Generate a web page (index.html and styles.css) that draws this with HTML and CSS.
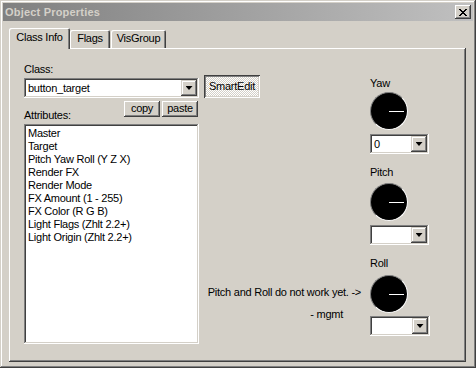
FILE: index.html
```html
<!DOCTYPE html>
<html lang="en">
    <head>
        <title>Object Properties</title>
        <link rel="stylesheet" href="styles.css">
    </head>
    <body>
        <div class="window">
            <div class="titlebar">
                <span class="title">Object Properties</span>
                <div class="close">
                    <svg width="8" height="7" viewBox="0 0 8 7" shape-rendering="crispEdges">
                        <path d="M0 0h2v1H0zM6 0h2v1H6zM1 1h2v1H1zM5 1h2v1H5zM2 2h4v1H2zM3 3h2v1H3zM2 4h4v1H2zM1 5h2v1H1zM5 5h2v1H5zM0 6h2v1H0zM6 6h2v1H6z"/>
                    </svg>
                </div>
            </div>

            <div class="content">
                <div class="tabs">
                    <div class="tab tab-active tab-class">Class Info</div>
                    <div class="tab tab-flags">Flags</div>
                    <div class="tab tab-vis">VisGroup</div>
                </div>

                <div class="panel">
                    <!-- Class / attributes column -->
                    <div class="left">
                        <p class="label">Class:</p>
                        <div class="combo combo-class">
                            <span class="combo-value">button_target</span>
                            <span class="drop"></span>
                        </div>
                        <div class="attr-row">
                            <p class="label attr-label">Attributes:</p>
                            <div class="buttons">
                                <div class="btn">copy</div>
                                <div class="btn">paste</div>
                            </div>
                        </div>
                        <ul class="list">
                            <li>Master</li>
                            <li>Target</li>
                            <li>Pitch Yaw Roll (Y Z X)</li>
                            <li>Render FX</li>
                            <li>Render Mode</li>
                            <li>FX Amount (1 - 255)</li>
                            <li>FX Color (R G B)</li>
                            <li>Light Flags (Zhlt 2.2+)</li>
                            <li>Light Origin (Zhlt 2.2+)</li>
                        </ul>
                    </div>

                    <!-- SmartEdit + angle dials -->
                    <div class="side">
                        <div class="smartedit">SmartEdit</div>

                        <p class="label dial-label yaw-label">Yaw</p>
                        <div class="dial dial-yaw"></div>
                        <div class="combo combo-angle">
                            <span class="combo-value">0</span>
                            <span class="drop"></span>
                        </div>

                        <p class="label dial-label">Pitch</p>
                        <div class="dial dial-pitch"></div>
                        <div class="combo combo-angle">
                            <span class="combo-value"></span>
                            <span class="drop"></span>
                        </div>

                        <p class="label dial-label">Roll</p>
                        <div class="note">
                            <p class="note-line">Pitch and Roll do not work yet. -&gt;</p>
                            <p class="note-sign">- mgmt</p>
                        </div>
                        <div class="dial dial-roll"></div>
                        <div class="combo combo-angle combo-roll">
                            <span class="combo-value"></span>
                            <span class="drop"></span>
                        </div>
                    </div>
                </div>
            </div>
        </div>
    </body>
</html>
```

FILE: styles.css
```css
body {
    margin: 0;
    background: #d4d0c8;
    font: 11px "Liberation Sans", Arial, sans-serif;
    letter-spacing: -0.25px;
    color: #000;
}

p,
ul {
    margin: 0;
}

/* Window frame */
.window {
    width: 476px;
    height: 368px;
    box-sizing: border-box;
    padding: 3px;
    display: flex;
    flex-direction: column;
    background: #d4d0c8;
    box-shadow: inset -1px -1px #404040, inset 1px 1px #d4d0c8,
                inset -2px -2px #808080, inset 2px 2px #fff;
}

.titlebar {
    height: 18px;
    padding: 0 2px;
    display: flex;
    align-items: center;
    justify-content: space-between;
    background: linear-gradient(to right, #808080, #c0c0c0);
}

.title {
    color: #d4d0c8;
    font-weight: bold;
    letter-spacing: 0.2px;
}

.close {
    width: 16px;
    height: 14px;
    box-sizing: border-box;
    display: flex;
    align-items: center;
    justify-content: center;
    background: #d4d0c8;
    box-shadow: inset -1px -1px #404040, inset 1px 1px #fff,
                inset -2px -2px #808080, inset 2px 2px #d4d0c8;
}

.content {
    flex: 1;
    padding: 7px 7px 3px 6px;
    display: flex;
    flex-direction: column;
}

/* Tabs */
.tabs {
    height: 20px;
    display: flex;
    align-items: flex-end;
    position: relative;
    z-index: 1;
}

.tab {
    height: 18px;
    box-sizing: border-box;
    line-height: 17px;
    text-align: center;
    background: #d4d0c8;
    border-radius: 2px 2px 0 0;
    box-shadow: inset 1px 1px #fff, inset -1px 0 #404040, inset -2px 0 #808080;
}

.tab-active {
    height: 21px;
    margin-bottom: -1px;
    line-height: 19px;
}

.tab-class {
    width: 61px;
}

.tab-flags {
    width: 40px;
}

.tab-vis {
    width: 55px;
    margin-left: 1px;
}

.panel {
    flex: 1;
    padding: 15px 0 0 15px;
    display: flex;
    gap: 5px;
    box-shadow: inset -1px -1px #404040, inset 1px 1px #fff, inset -2px -2px #808080;
}

/* Left column */
.left {
    width: 175px;
    display: flex;
    flex-direction: column;
}

.label {
    line-height: 13px;
}

.combo {
    height: 20px;
    box-sizing: border-box;
    padding: 2px;
    display: flex;
    background: #fff;
    box-shadow: inset -1px -1px #fff, inset 1px 1px #808080,
                inset -2px -2px #d4d0c8, inset 2px 2px #404040;
}

.combo-class {
    margin-top: 2px;
}

.combo-value {
    flex: 1;
    padding-left: 2px;
    line-height: 16px;
}

.drop {
    width: 16px;
    height: 16px;
    box-sizing: border-box;
    display: flex;
    align-items: center;
    justify-content: center;
    background: #d4d0c8;
    box-shadow: inset -1px -1px #404040, inset 1px 1px #d4d0c8,
                inset -2px -2px #808080, inset 2px 2px #fff;
}

.drop::after {
    content: "";
    width: 7px;
    height: 4px;
    background: #000;
    clip-path: polygon(0 0, 100% 0, 50% 100%);
}

.attr-row {
    margin-top: 3px;
    display: flex;
    justify-content: space-between;
}

.attr-label {
    margin-top: 8px;
}

.buttons {
    display: flex;
    gap: 2px;
    margin-right: 1px;
}

.btn {
    width: 36px;
    height: 16px;
    line-height: 15px;
    text-align: center;
    box-shadow: inset -1px -1px #404040, inset 1px 1px #fff, inset -2px -2px #808080;
}

.list {
    margin-top: 2px;
    height: 220px;
    box-sizing: border-box;
    padding: 3px 4px;
    list-style: none;
    line-height: 13px;
    background: #fff;
    box-shadow: inset -1px -1px #fff, inset 1px 1px #808080,
                inset -2px -2px #d4d0c8, inset 2px 2px #404040;
}

/* Right side: SmartEdit and dials */
.side {
    display: grid;
    grid-template-columns: 166px 60px;
    align-content: start;
}

.smartedit {
    grid-column: 1;
    grid-row: 1 / span 3;
    align-self: start;
    justify-self: start;
    margin-top: 12px;
    width: 56px;
    height: 23px;
    line-height: 23px;
    text-align: center;
    background: repeating-conic-gradient(#fff 0 25%, #d4d0c8 0 50%) 0 0 / 2px 2px;
    box-shadow: inset 1px 1px #404040, inset -1px -1px #fff,
                inset 2px 2px #808080, inset -2px -2px #d4d0c8;
}

.dial-label {
    grid-column: 2;
    margin-top: 12px;
}

.yaw-label {
    margin-top: 14px;
}

.dial {
    grid-column: 2;
    width: 38px;
    height: 38px;
    box-sizing: border-box;
    position: relative;
    border-radius: 50%;
    border: 1px solid;
    border-color: #808080 #fff #fff #808080;
    background: #000;
}

.dial::after {
    content: "";
    position: absolute;
    left: 18px;
    top: 18px;
    width: 15px;
    height: 1px;
    background: #fff;
}

.dial-yaw {
    margin-top: 2px;
}

.dial-pitch {
    margin-top: 4px;
}

.dial-roll {
    margin-top: 5px;
}

.combo-angle {
    grid-column: 2;
    width: 59px;
    margin-top: 4px;
}

.combo-roll {
    margin-top: 3px;
    width: 60px;
}

.note {
    grid-column: 1;
    grid-row: 8 / span 2;
    align-self: start;
    text-align: right;
    white-space: nowrap;
    line-height: 13px;
}

.note-line {
    margin-top: 16px;
    padding-right: 9px;
}

.note-sign {
    margin-top: 9px;
    padding-right: 27px;
}
```
